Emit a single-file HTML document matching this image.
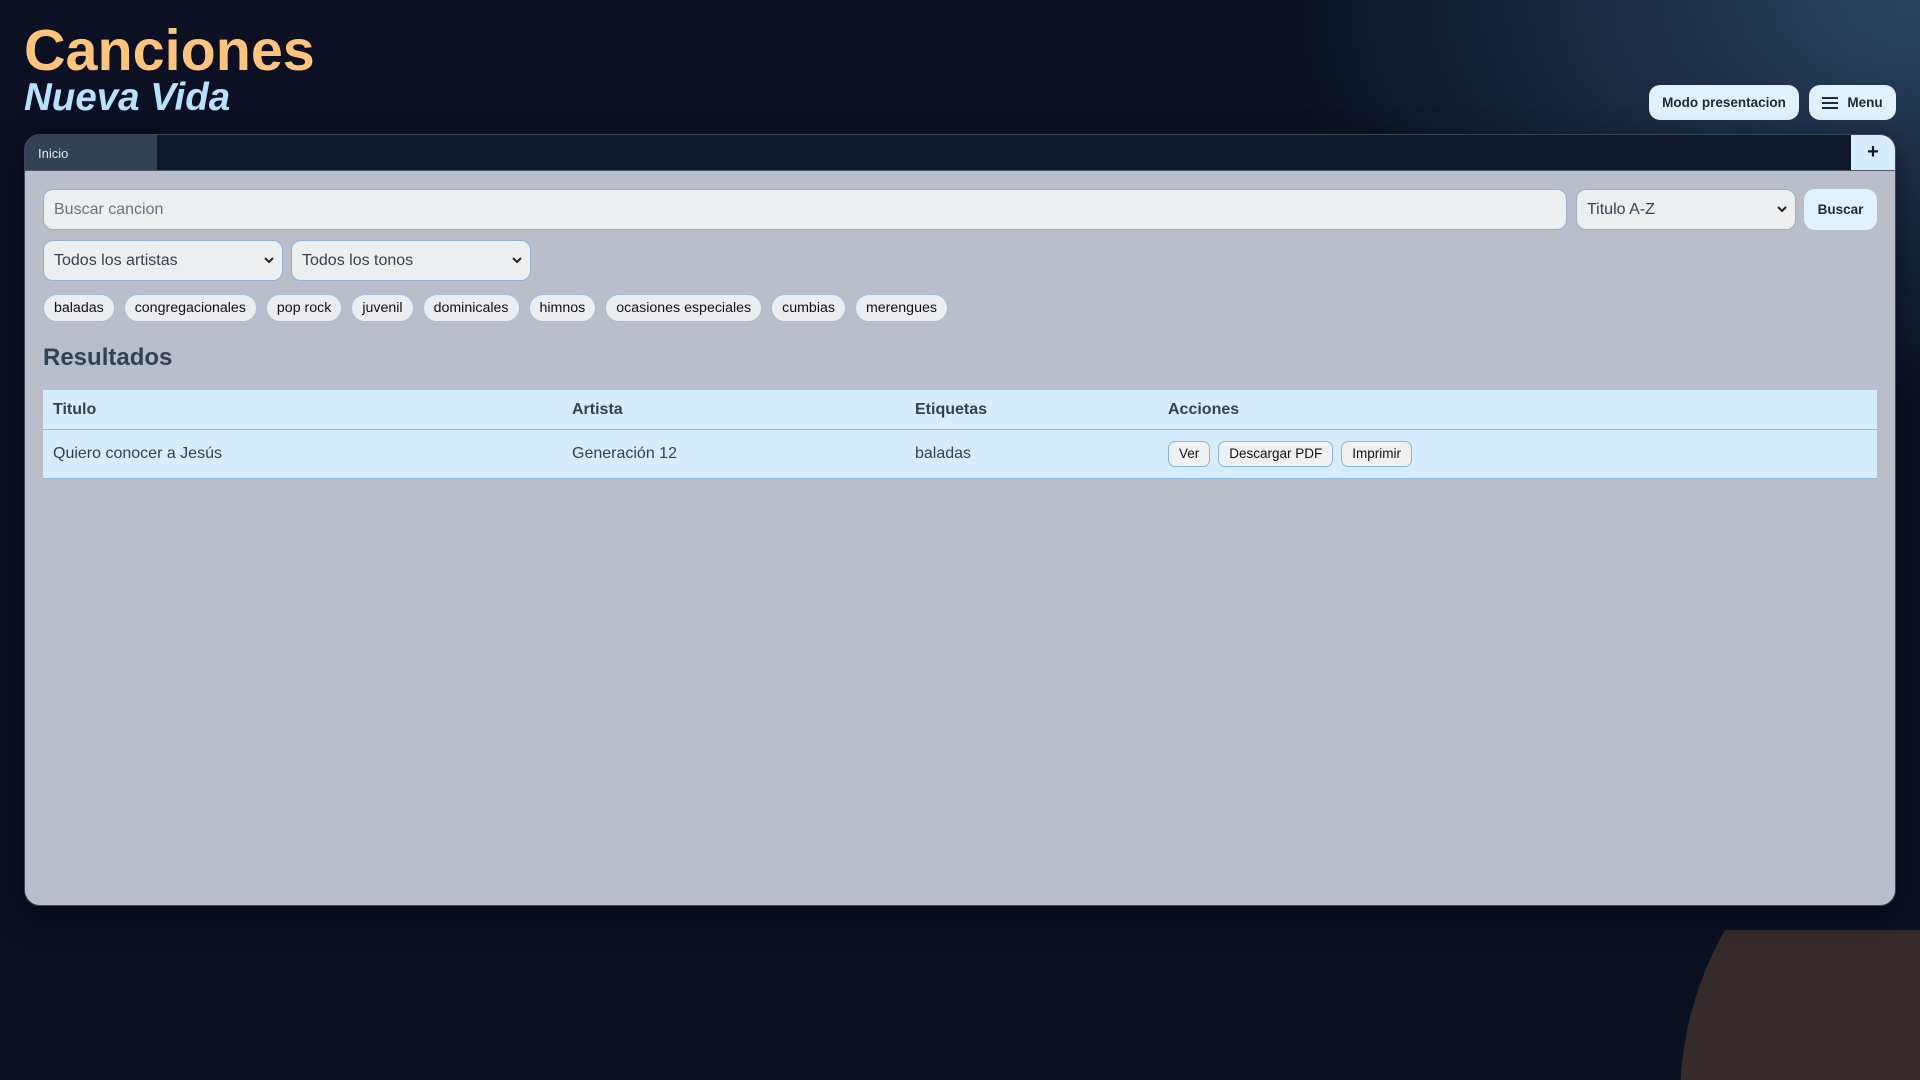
<!DOCTYPE html>
<html><head><meta charset="utf-8"><style>
*{box-sizing:border-box;margin:0;padding:0}
html,body{width:1920px;height:1080px;overflow:hidden}
body{font-family:"Liberation Sans",Arial,sans-serif;background:#0b1022;position:relative}
.glow{position:absolute;inset:0;background:radial-gradient(ellipse 650px 400px at 1920px 0px,#284560 0%,#1c2c45 45%,rgba(12,16,34,0) 100%)}
.blobwrap{position:absolute;left:0;top:930px;width:1920px;height:150px;overflow:hidden}
.blob{position:absolute;left:1680px;top:-174px;width:688px;height:688px;border-radius:50%;background:#352a2c}
h1{position:absolute;left:24px;top:16px;font-size:57.5px;font-weight:bold;color:#fec47e;line-height:70px}
h2{position:absolute;left:24px;top:75px;font-size:38.5px;font-weight:bold;font-style:italic;color:#b7e1fc;line-height:46px}
.tb{position:absolute;top:85px;height:35px;background:#e0f2fe;border-radius:11px;font-weight:bold;font-size:13.5px;color:#1e293b;display:flex;align-items:center;justify-content:center}
.panel{position:absolute;left:24px;top:134px;width:1872px;height:772px;background:#b9bec9;border-radius:16px;overflow:hidden;box-shadow:0 10px 30px rgba(0,0,0,.5);border:1px solid #3c4658}
.tabs{position:absolute;left:0;top:0;width:100%;height:36px;background:#0f172a;border-bottom:1px solid #4a5568}
.tab{position:absolute;left:0;top:0;width:132px;height:35px;background:#334155;color:#e5e7eb;font-size:13px;padding:11px 0 0 13px}
.plus{position:absolute;right:0;top:0;width:44px;height:35px;background:#d7ecfd;color:#0f172a;font-size:20px;font-weight:bold;text-align:center;line-height:35px}
.in{position:absolute;background:#edeef0;border:1px solid #8db4d8;border-radius:10px;font-size:16px;color:#374151;display:flex;align-items:center;padding-left:10px}
.in .ar{position:absolute;right:8px;top:50%;margin-top:-5px}
.chips{position:absolute;left:18px;top:159px;display:flex;gap:9px}
.chip{height:28px;border:1px solid #9fc2e0;background:#ecedf0;border-radius:14px;padding:0 10px;font-size:14.2px;color:#111;line-height:27px}
.res{position:absolute;left:18px;top:209px;font-size:24px;font-weight:bold;color:#334155}
table{position:absolute;left:18px;top:255px;width:1834px;border-collapse:collapse;background:#d6edfd;font-size:16px;color:#334155}
th{text-align:left;height:39px;padding-left:10px;padding-top:2px;border-bottom:1px solid #8fbde0;font-weight:bold}
td{height:49px;padding-left:10px;border-bottom:1px solid #8fbde0}
.ab{display:inline-block;height:26px;border:1px solid #8cb3d6;border-radius:7px;background:#eff0f2;font-size:13.5px;color:#111;line-height:24px;padding:0 10px;margin-right:8px}
</style></head><body>
<div class="glow"></div>
<div class="blobwrap"><div class="blob"></div></div>
<h1>Canciones</h1>
<h2>Nueva Vida</h2>
<div class="tb" style="left:1649px;width:150px">Modo presentacion</div>
<div class="tb" style="left:1809px;width:87px"><svg width="16" height="14" viewBox="0 0 16 14" style="margin-right:9px"><path d="M0 2h16M0 7h16M0 12h16" stroke="#1e293b" stroke-width="2"/></svg>Menu</div>
<div class="panel">
 <div class="tabs"><div class="tab">Inicio</div><div class="plus">+</div></div>
 <div class="in" style="left:18px;top:54px;width:1524px;height:41px;color:#6b7280">Buscar cancion</div>
 <div class="in" style="left:1551px;top:54px;width:220px;height:41px">Titulo A-Z<svg class="ar" width="10" height="8" viewBox="0 0 10 8"><path d="M1 2l4 4 4-4" stroke="#222" stroke-width="2" fill="none"/></svg></div>
 <div class="tb" style="left:1779px;top:54px;width:73px;height:41px">Buscar</div>
 <div class="in" style="left:18px;top:105px;width:240px;height:41px">Todos los artistas<svg class="ar" width="10" height="8" viewBox="0 0 10 8"><path d="M1 2l4 4 4-4" stroke="#222" stroke-width="2" fill="none"/></svg></div>
 <div class="in" style="left:266px;top:105px;width:240px;height:41px">Todos los tonos<svg class="ar" width="10" height="8" viewBox="0 0 10 8"><path d="M1 2l4 4 4-4" stroke="#222" stroke-width="2" fill="none"/></svg></div>
 <div class="chips"><span class="chip">baladas</span><span class="chip">congregacionales</span><span class="chip">pop rock</span><span class="chip">juvenil</span><span class="chip">dominicales</span><span class="chip">himnos</span><span class="chip">ocasiones especiales</span><span class="chip">cumbias</span><span class="chip">merengues</span></div>
 <div class="res">Resultados</div>
 <table>
  <tr><th style="width:519px">Titulo</th><th style="width:343px">Artista</th><th style="width:253px">Etiquetas</th><th>Acciones</th></tr>
  <tr><td>Quiero conocer a Jesús</td><td>Generación 12</td><td>baladas</td><td><span class="ab">Ver</span><span class="ab">Descargar PDF</span><span class="ab">Imprimir</span></td></tr>
 </table>
</div>
</body></html>
